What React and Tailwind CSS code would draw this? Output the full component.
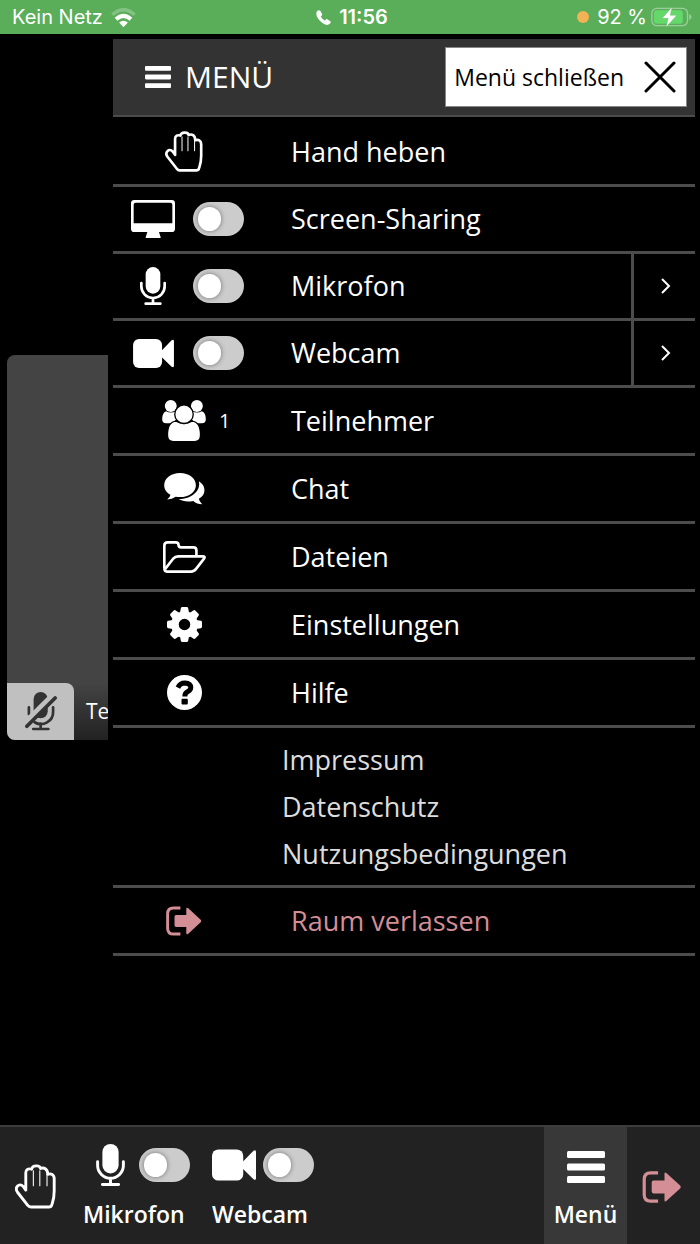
import React, { useState } from 'react';

const HandIcon = ({ className }) => (
  <svg viewBox="0 0 114 124" className={className} fill="none" stroke="currentColor" strokeLinejoin="round" strokeLinecap="round" aria-hidden="true">
    <path
      strokeWidth="8"
      d="M30 72V24C30 14 38 11 46 14C48 2 69 2 71 12C80 8 91 12 91 28C100 25 109 28 109 40V74C109 98 105 104 102 114C101 118 98 119 94 119H44C40 119 38 118 36 115L7 78C-2 65 11 50 23 62L30 72"
    />
    <path strokeWidth="3" d="M51 18V60M69 18V60M89 28V60" />
  </svg>
);

const MonitorIcon = ({ className }) => (
  <svg viewBox="0 0 132 114" className={className} fill="currentColor" aria-hidden="true">
    <path fillRule="evenodd" d="M10 0H122Q132 0 132 10V86Q132 96 122 96H84L87 106Q89 109 89 114H44Q44 109 46 106L49 96H10Q0 96 0 86V10Q0 0 10 0ZM14 8Q8 8 8 14V70H124V14Q124 8 118 8Z" />
  </svg>
);

const MicIcon = ({ className }) => (
  <svg viewBox="0 0 78 114" className={className} fill="none" stroke="currentColor" strokeWidth="8" strokeLinecap="round" aria-hidden="true">
    <rect x="17" y="0" width="44" height="80" rx="22" fill="currentColor" stroke="none" />
    <path d="M4 48V58A35 35 0 0 0 74 58V48M39 94V110M17 110H61" />
  </svg>
);

const MicOffIcon = ({ className }) => (
  <svg viewBox="0 0 94 116" className={className} fill="none" stroke="currentColor" strokeWidth="8" strokeLinecap="round" aria-hidden="true">
    <rect x="25" y="0" width="42" height="78" rx="21" fill="currentColor" stroke="none" />
    <path d="M11 46V66M83 46V58A36 36 0 0 1 28 90M46 94V110M24 110H69" />
    <path d="M4 90L88 6" stroke="#c0c0c0" strokeWidth="20" strokeLinecap="butt" />
    <path d="M5 102L89 18" strokeWidth="11" />
  </svg>
);

const CameraIcon = ({ className }) => (
  <svg viewBox="0 0 124 88" className={className} fill="currentColor" aria-hidden="true">
    <rect width="88" height="88" rx="18" />
    <path d="M84 38L117 4Q124 0 124 7V81Q124 88 117 84L84 52Z" />
  </svg>
);

const UsersIcon = ({ className }) => (
  <svg viewBox="0 0 132 124" className={className} fill="currentColor" aria-hidden="true">
    <circle cx="26" cy="18" r="18" />
    <circle cx="105" cy="18" r="18" />
    <path d="M12 34Q26 42 42 34V58L34 70H12Q0 70 0 58Q0 38 12 34ZM120 34Q106 42 90 34V58L98 70H120Q132 70 132 58Q132 38 120 34Z" />
    <path stroke="#000" strokeWidth="4" d="M42 64Q66 78 90 64Q116 66 116 106Q116 126 98 126H34Q16 126 16 106Q16 66 42 64Z" />
    <circle cx="66" cy="43" r="28" stroke="#000" strokeWidth="4" />
  </svg>
);

const ChatIcon = ({ className }) => (
  <svg viewBox="0 0 123 97" className={className} fill="currentColor" aria-hidden="true">
    <path d="M48 0C75 0 96 16 96 37C96 58 75 73 48 73Q41 73 35 72Q24 80 9 80Q18 73 19 66C7 60 0 49 0 37C0 16 21 0 48 0Z" />
    <path d="M105 25C117 32 122 42 122 52Q122 68 105 78Q106 86 115 95Q99 95 88 85C69 89 54 85 44 79C82 79 112 55 105 25Z" />
  </svg>
);

const FolderIcon = ({ className }) => (
  <svg viewBox="0 0 130 96" className={className} fill="none" stroke="currentColor" strokeWidth="8" strokeLinejoin="round" aria-hidden="true">
    <path d="M4 82V14Q4 4 14 4H38Q47 4 47 12Q47 19 55 19H92Q101 19 101 28V45" />
    <path d="M5 86L30 54Q37 46 46 46H120Q129 46 124 53L100 84Q94 92 85 92H12Q4 92 4 82" />
  </svg>
);

const GearIcon = ({ className }) => (
  <svg viewBox="-53 -53 106 106" className={className} fill="currentColor" aria-hidden="true">
    <circle r="29" fill="none" stroke="currentColor" strokeWidth="23" />
    {[0, 45, 90, 135, 180, 225, 270, 315].map((angle) => (
      <path key={angle} transform={`rotate(${angle})`} d="M-14 -34L-11 -50Q-10 -53 -7 -53H7Q10 -53 11 -50L14 -34Z" />
    ))}
  </svg>
);

const HelpIcon = ({ className }) => (
  <svg viewBox="0 0 106 106" className={className} fill="currentColor" aria-hidden="true">
    <circle cx="53" cy="53" r="53" />
    <path d="M33 38Q40 24 54 24Q72 25 72 38Q72 46 62 51Q54 55 54 65" fill="none" stroke="#000" strokeWidth="15" />
    <rect x="44" y="72" width="19" height="17" rx="3" fill="#000" />
  </svg>
);

const ExitIcon = ({ className }) => (
  <svg viewBox="0 0 110 90" className={className} fill="currentColor" aria-hidden="true">
    <path fill="none" stroke="currentColor" strokeWidth="9" d="M44 5H23Q5 5 5 23V67Q5 85 23 85H44" />
    <path d="M31 27H62V8Q62 2 68 6L106 41Q110 45 106 49L68 84Q62 88 62 82V63H31Q26 63 26 58V32Q26 27 31 27Z" />
  </svg>
);

const BarsIcon = ({ className }) => (
  <svg viewBox="0 0 38 32" className={className} fill="currentColor" aria-hidden="true">
    <rect width="38" height="7" rx="1.5" />
    <rect y="12.5" width="38" height="7" rx="1.5" />
    <rect y="25" width="38" height="7" rx="1.5" />
  </svg>
);

const WifiIcon = () => (
  <svg viewBox="0 0 74 56" className="w-[25px] h-[19px]" fill="none" stroke="currentColor" strokeWidth="10" aria-hidden="true">
    <path opacity="0.25" d="M4 20Q37 -10 70 20" />
    <path strokeWidth="12" d="M15 33Q37 13 59 33" />
    <path fill="currentColor" stroke="none" d="M24 43Q37 32 50 43L39 55Q37 57 35 55Z" />
  </svg>
);

const PhoneIcon = () => (
  <svg viewBox="0 0 44 44" className="w-[15px] h-[15px]" fill="currentColor" aria-hidden="true">
    <path d="M2 5Q8 -2 13 3L18 12Q19 15 14 19Q18 27 26 31Q30 25 33 27L42 33Q46 37 38 42Q30 47 17 37Q-3 20 2 5Z" />
  </svg>
);

const BatteryIcon = () => (
  <svg viewBox="0 0 122 60" className="w-[41px] h-5" aria-hidden="true">
    <rect x="2" y="4" width="107" height="52" rx="15" fill="none" stroke="#9bcd9b" strokeWidth="4" />
    <path d="M114 21Q121 24 121 30Q121 36 114 39Z" fill="#9bcd9b" />
    <rect x="8" y="10" width="87" height="40" rx="9" fill="#65d86b" />
    <path d="M63 0L33 34H51L45 60L77 25H57Z" fill="#fff" stroke="#5aae5a" strokeWidth="1" />
  </svg>
);

const Switch = ({ label }) => {
  const [on, setOn] = useState(false);

  return (
    <input
      type="checkbox"
      role="switch"
      aria-label={label}
      checked={on}
      onChange={() => setOn(!on)}
      className="appearance-none shrink-0 flex items-center w-[51px] h-[34px] px-[5px] rounded-full bg-[#cccccc] cursor-pointer checked:justify-end checked:bg-green-500 before:content-[''] before:w-[23px] before:h-6 before:rounded-full before:bg-white before:shadow-[0_0_5px_rgba(0,0,0,0.45)]"
    />
  );
};

// Zeile mit Schalter, optional mit Untermenü
const SwitchRow = ({ icon, label, more }) => (
  <li className="flex h-[67px] border-b-3 border-[#4c4c4c]">
    <div className="flex flex-1 items-center pl-[18px]">
      <span className="flex w-11 justify-center">{icon}</span>
      <span className="flex w-[116px] pl-[18px]">
        <Switch label={label} />
      </span>
      <span>{label}</span>
    </div>
    {more && (
      <button type="button" aria-label={`${label} Optionen`} className="flex w-16 items-center justify-center pl-0.5 border-l-3 border-[#4c4c4c]">
        <svg viewBox="0 0 10 16" className="w-[10px] h-4" fill="none" stroke="currentColor" strokeWidth="2" aria-hidden="true">
          <path d="M1 1L8 8L1 15" />
        </svg>
      </button>
    )}
  </li>
);

const MenuRow = ({ icon, label, count, danger }) => (
  <li className="h-[68px] border-b-3 border-[#4c4c4c]">
    <button type="button" className={`flex w-full h-full items-center pl-[49px] text-left ${danger ? 'text-[#d38e96]' : ''}`}>
      <span className="flex w-11 justify-center">{icon}</span>
      <span className="w-[85px] pl-[13px] text-xl">{count}</span>
      <span>{label}</span>
    </button>
  </li>
);

const App = () => {
  return (
    <div className="min-h-screen flex flex-col bg-black text-white font-['Open_Sans',sans-serif]">
      {/* Status bar */}
      <header className="grid grid-cols-3 items-center h-[34px] pl-3 pr-2 bg-[#5aae5a] font-['Inter',sans-serif] text-xl">
        <div className="flex items-center gap-2">
          <span>Kein Netz</span>
          <WifiIcon />
        </div>
        <div className="flex items-center justify-center gap-2 font-semibold">
          <PhoneIcon />
          <span>11:56</span>
        </div>
        <div className="flex items-center justify-end gap-1">
          <span className="w-3 h-3 mr-1 rounded-full bg-[#f2b255]"></span>
          <span>92 %</span>
          <BatteryIcon />
        </div>
      </header>

      <main className="flex flex-1">
        {/* Participant tile */}
        <section className="flex w-[108px] shrink-0 flex-col justify-center pl-[7px] pb-16">
          <div className="flex h-[385px] flex-col justify-end overflow-hidden rounded-l-lg bg-[#444444]">
            <div className="flex h-[57px] items-center bg-linear-to-b from-[#444444] to-[#222222]">
              <span className="flex w-[67px] h-full shrink-0 items-center justify-center rounded-tr-lg bg-[#c0c0c0] text-[#333333]">
                <MicOffIcon className="w-8 h-[39px]" />
              </span>
              <span className="pl-3 text-[21px] whitespace-nowrap">Te</span>
            </div>
          </div>
        </section>

        {/* Menu */}
        <nav className="flex-1 pt-[5px] pl-[5px] pr-[5px] text-[27px] leading-9">
          <div className="flex h-[78px] items-center justify-between pl-8 pr-2 bg-[#333333] border-b-2 border-[#4c4c4c]">
            <h1 className="flex items-center gap-[14px] text-[30px]">
              <BarsIcon className="w-[26px] h-[22px]" />
              <span>MENÜ</span>
            </h1>
            <button type="button" className="flex h-[60px] items-center gap-4 pl-2 pr-[10px] bg-white text-black text-[23px] border border-[#888888]">
              <span className="pr-1">Menü schließen</span>
              <svg viewBox="0 0 32 32" className="w-8 h-8" fill="none" stroke="currentColor" strokeWidth="3" strokeLinecap="round" aria-hidden="true">
                <path d="M2 2L30 30M30 2L2 30" />
              </svg>
            </button>
          </div>

          <ul className="pt-[2px]">
            <MenuRow icon={<HandIcon className="w-[38px] h-[41px]" />} label="Hand heben" />
            <SwitchRow icon={<MonitorIcon className="w-11 h-[38px]" />} label="Screen-Sharing" />
            <SwitchRow icon={<MicIcon className="w-[26px] h-[38px]" />} label="Mikrofon" more />
            <SwitchRow icon={<CameraIcon className="w-[41px] h-[29px]" />} label="Webcam" more />
            <MenuRow icon={<UsersIcon className="w-11 h-[41px]" />} label="Teilnehmer" count="1" />
            <MenuRow icon={<ChatIcon className="w-[41px] h-8" />} label="Chat" />
            <MenuRow icon={<FolderIcon className="w-[43px] h-8" />} label="Dateien" />
            <MenuRow icon={<GearIcon className="w-[35px] h-[35px]" />} label="Einstellungen" />
            <MenuRow icon={<HelpIcon className="w-[35px] h-[35px]" />} label="Hilfe" />
            <li className="flex flex-col items-start py-2 pl-[169px] border-b-3 border-[#4c4c4c] text-[#dddddd] leading-[47px]">
              <a href="#impressum">Impressum</a>
              <a href="#datenschutz">Datenschutz</a>
              <a href="#nutzungsbedingungen">Nutzungsbedingungen</a>
            </li>
            <MenuRow icon={<ExitIcon className="w-9 h-[30px]" />} label="Raum verlassen" danger />
          </ul>
        </nav>
      </main>

      {/* Bottom toolbar */}
      <footer className="flex h-[119px] justify-between bg-[#222222] border-t-2 border-[#3c3c3c] text-[23px] leading-8 font-semibold">
        <div className="flex">
          <button type="button" aria-label="Hand heben" className="flex w-[70px] items-center justify-center pt-[2px]">
            <HandIcon className="w-[41px] h-[45px]" />
          </button>
          <div className="flex flex-col items-start pt-4 pl-[13px]">
            <div className="flex h-11 items-center gap-[14px] pl-[13px]">
              <MicIcon className="w-[29px] h-[42px]" />
              <Switch label="Mikrofon" />
            </div>
            <span className="pt-[11px]">Mikrofon</span>
          </div>
          <div className="flex flex-col items-start pt-4 pl-[22px]">
            <div className="flex h-11 items-center gap-[7px]">
              <CameraIcon className="w-11 h-8" />
              <Switch label="Webcam" />
            </div>
            <span className="pt-[11px]">Webcam</span>
          </div>
        </div>
        <div className="flex">
          <button type="button" className="flex w-[83px] flex-col items-center pt-4 bg-[#383838]">
            <span className="flex h-11 items-center pt-1">
              <BarsIcon className="w-[38px] h-8" />
            </span>
            <span className="pt-[11px]">Menü</span>
          </button>
          <button type="button" aria-label="Raum verlassen" className="flex w-[73px] items-center justify-center pt-[2px] pr-1 text-[#d38e96]">
            <ExitIcon className="w-10 h-8" />
          </button>
        </div>
      </footer>
    </div>
  );
};

export default App;
